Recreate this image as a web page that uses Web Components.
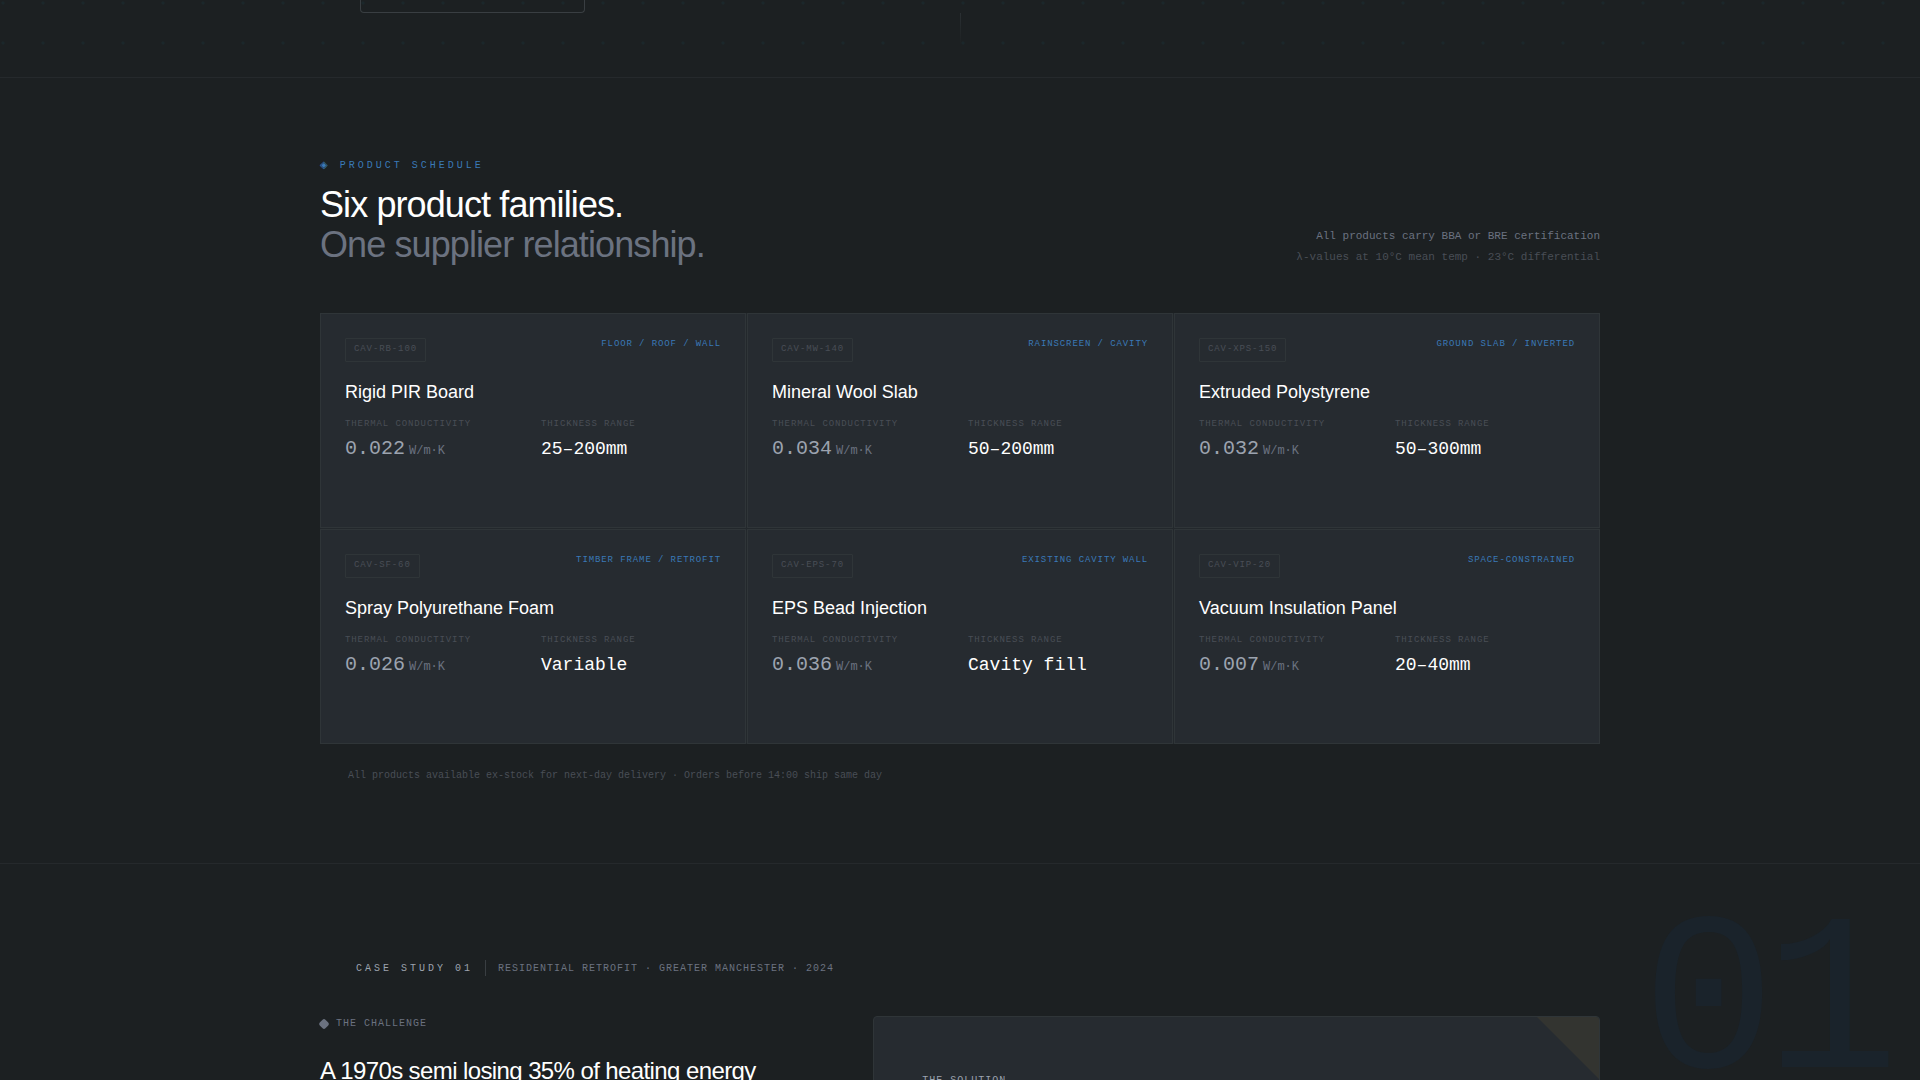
<!DOCTYPE html>
<html lang="en">
<head>
<meta charset="utf-8">
<meta name="viewport" content="width=device-width, initial-scale=1">
<title>Product schedule</title>
<style>
  :root {
    --bg: #1c2022;
    --panel: #262b30;
    --line: #2f3538;
    --rule: #25292c;
    --blue: #3a79b7;
    --white: #ffffff;
    --silver: #9ca3af;
    --grey: #6b7280;
    --dim: #494e56;
    --mono: "Liberation Mono", monospace;
    --sans: "Liberation Sans", sans-serif;
  }
  html, body { margin: 0; }
  body {
    height: 100vh;
    overflow: hidden;
    background: var(--bg);
    color: var(--white);
    font-family: var(--sans);
  }
</style>
</head>
<body>
<hero-tail></hero-tail>

<product-schedule>
  <span slot="eyebrow">PRODUCT SCHEDULE</span>
  <span slot="title">Six product families.</span>
  <span slot="subtitle">One supplier relationship.</span>
  <span slot="note">All products carry BBA or BRE certification</span>
  <span slot="subnote">λ-values at 10°C mean temp · 23°C differential</span>

  <product-card code="CAV-RB-100" use="FLOOR / ROOF / WALL" lambda="0.022" range="25–200mm">Rigid PIR Board</product-card>
  <product-card code="CAV-MW-140" use="RAINSCREEN / CAVITY" lambda="0.034" range="50–200mm">Mineral Wool Slab</product-card>
  <product-card code="CAV-XPS-150" use="GROUND SLAB / INVERTED" lambda="0.032" range="50–300mm">Extruded Polystyrene</product-card>
  <product-card code="CAV-SF-60" use="TIMBER FRAME / RETROFIT" lambda="0.026" range="Variable">Spray Polyurethane Foam</product-card>
  <product-card code="CAV-EPS-70" use="EXISTING CAVITY WALL" lambda="0.036" range="Cavity fill">EPS Bead Injection</product-card>
  <product-card code="CAV-VIP-20" use="SPACE-CONSTRAINED" lambda="0.007" range="20–40mm">Vacuum Insulation Panel</product-card>

  <span slot="footnote">All products available ex-stock for next-day delivery · Orders before 14:00 ship same day</span>
</product-schedule>

<case-study number="01">
  <span slot="label">CASE STUDY 01</span>
  <span slot="meta">RESIDENTIAL RETROFIT · GREATER MANCHESTER · 2024</span>
  <span slot="challenge">THE CHALLENGE</span>
  <span slot="headline">A 1970s semi losing 35% of heating energy</span>
  <solution-panel slot="solution">THE SOLUTION</solution-panel>
</case-study>

<script>
  class Base extends HTMLElement {
    constructor() {
      super();
      this.attachShadow({ mode: "open" });
    }
    connectedCallback() {
      this.shadowRoot.innerHTML = this.render();
    }
    attr(name) {
      return this.getAttribute(name) || "";
    }
  }

  /* Lower edge of the hero: dot grid, outlined box and scroll line */
  customElements.define("hero-tail", class extends Base {
    render() {
      return `
        <style>
          :host {
            display: block;
            box-sizing: border-box;
            height: 78px;
            border-bottom: 1px solid var(--rule);
            background-image: radial-gradient(circle at 3px 3px, #1b272b 1px, transparent 2px);
            background-size: 40px 40px;
          }
          .wrap {
            display: grid;
            grid-template-columns: 1fr 1fr;
            max-width: 1280px;
            height: 100%;
            margin: 0 auto;
          }
          .box {
            box-sizing: border-box;
            width: 225px;
            height: 13px;
            margin-left: 40px;
            border: 1px solid #393e42;
            border-top: 0;
            border-radius: 0 0 4px 4px;
          }
          .scroll {
            align-self: end;
            width: 1px;
            height: 64px;
            background: linear-gradient(#2b3033, transparent 50%);
          }
        </style>
        <div class="wrap"><div class="box"></div><div class="scroll"></div></div>`;
    }
  });

  customElements.define("product-card", class extends Base {
    render() {
      return `
        <style>
          :host {
            display: block;
            box-sizing: border-box;
            min-height: 215px;
            padding: 24px;
            border: 1px solid var(--line);
            background: var(--panel);
          }
          header {
            display: flex;
            justify-content: space-between;
            align-items: flex-start;
            margin-bottom: 16px;
            font: 9px/13px var(--mono);
            letter-spacing: 0.1em;
          }
          .code {
            box-sizing: border-box;
            min-height: 24px;
            padding: 4px 8px;
            border: 1px solid var(--line);
            border-radius: 1px;
            color: var(--dim);
          }
          .use { color: var(--blue); }
          h3 {
            margin: 0 0 12px;
            font: 400 18px/28px var(--sans);
            color: var(--white);
          }
          dl {
            display: grid;
            grid-template-columns: 1fr 1fr;
            gap: 16px;
            margin: 0;
            font-family: var(--mono);
          }
          dt {
            margin-bottom: 4px;
            font-size: 9px;
            line-height: 13px;
            letter-spacing: 0.1em;
            color: var(--dim);
          }
          dd {
            display: flex;
            align-items: baseline;
            gap: 4px;
            margin: 0;
            line-height: 28px;
          }
          .lambda { font-size: 20px; color: var(--silver); }
          .unit { font-size: 12px; color: var(--grey); }
          .range { font-size: 18px; color: var(--white); }
        </style>
        <header><span class="code">${this.attr("code")}</span><span class="use">${this.attr("use")}</span></header>
        <h3><slot></slot></h3>
        <dl>
          <div><dt>THERMAL CONDUCTIVITY</dt><dd><span class="lambda">${this.attr("lambda")}</span><span class="unit">W/m·K</span></dd></div>
          <div><dt>THICKNESS RANGE</dt><dd><span class="range">${this.attr("range")}</span></dd></div>
        </dl>`;
    }
  });

  customElements.define("product-schedule", class extends Base {
    render() {
      return `
        <style>
          :host { display: block; padding: 80px 0; }
          .wrap { max-width: 1280px; margin: 0 auto; }
          .head {
            display: flex;
            justify-content: space-between;
            align-items: flex-end;
            margin-bottom: 48px;
          }
          .eyebrow {
            display: flex;
            gap: 9px;
            margin: 0 0 12px;
            font: 10px/15px var(--mono);
            letter-spacing: 0.3em;
            color: var(--blue);
          }
          .mark { font-family: "DejaVu Sans", sans-serif; line-height: 14px; }
          h2 {
            margin: 0;
            font: 400 36px/40px var(--sans);
            letter-spacing: -0.025em;
          }
          h2 span { display: block; }
          .second { color: var(--grey); }
          .notes {
            display: flex;
            flex-direction: column;
            gap: 6px;
            font: 11px/15px var(--mono);
            text-align: right;
            color: var(--grey);
          }
          .notes p { margin: 0; }
          .notes p + p { color: var(--dim); }
          .grid {
            display: grid;
            grid-template-columns: repeat(3, 1fr);
            gap: 1px;
            background: #23282c;
          }
          .foot {
            margin: 24px 0 0;
            padding-left: 28px;
            font: 10px/15px var(--mono);
            color: var(--dim);
          }
        </style>
        <div class="wrap">
          <div class="head">
            <div>
              <p class="eyebrow"><span class="mark">◈</span><slot name="eyebrow"></slot></p>
              <h2><span><slot name="title"></slot></span><span class="second"><slot name="subtitle"></slot></span></h2>
            </div>
            <div class="notes"><p><slot name="note"></slot></p><p><slot name="subnote"></slot></p></div>
          </div>
          <div class="grid"><slot></slot></div>
          <p class="foot"><slot name="footnote"></slot></p>
        </div>`;
    }
  });

  customElements.define("solution-panel", class extends Base {
    render() {
      return `
        <style>
          :host {
            display: block;
            position: relative;
            overflow: hidden;
            padding: 56px 48px;
            border: 1px solid var(--line);
            border-radius: 4px;
            background: var(--panel);
          }
          .corner {
            position: absolute;
            top: -1px;
            right: -1px;
            width: 64px;
            height: 64px;
            background: #333430;
            clip-path: polygon(0 0, 100% 0, 100% 100%);
          }
          p {
            margin: 0;
            font: 10px/15px var(--mono);
            letter-spacing: 0.1em;
            color: var(--silver);
          }
        </style>
        <div class="corner"></div>
        <p><slot></slot></p>`;
    }
  });

  customElements.define("case-study", class extends Base {
    render() {
      return `
        <style>
          :host {
            display: block;
            position: relative;
            overflow: hidden;
            padding: 96px 0;
            border-top: 1px solid var(--rule);
          }
          .number {
            position: absolute;
            top: 32px;
            right: 32px;
            font: 224px/1 var(--mono);
            letter-spacing: -0.05em;
            color: #1a232b;
          }
          .wrap { position: relative; max-width: 1280px; margin: 0 auto; }
          .bar {
            display: flex;
            align-items: center;
            gap: 12px;
            margin-bottom: 40px;
            padding-left: 36px;
            font: 10px/15px var(--mono);
          }
          .label { letter-spacing: 0.3em; color: var(--silver); }
          .divider { width: 1px; height: 16px; background: #393e42; }
          .meta { letter-spacing: 0.1em; color: var(--grey); }
          .cols { display: grid; grid-template-columns: 5fr 7fr; gap: 34px; }
          .tag {
            display: flex;
            align-items: center;
            gap: 8px;
            margin: 0 0 24px;
            font: 10px/15px var(--mono);
            letter-spacing: 0.1em;
            color: var(--grey);
          }
          .diamond {
            width: 8px;
            height: 8px;
            border-radius: 2px;
            background: var(--grey);
            transform: rotate(45deg);
          }
          h3 {
            margin: 0;
            font: 400 24px/32px var(--sans);
            letter-spacing: -0.025em;
          }
        </style>
        <div class="number" aria-hidden="true">${this.attr("number")}</div>
        <div class="wrap">
          <div class="bar">
            <span class="label"><slot name="label"></slot></span>
            <span class="divider"></span>
            <span class="meta"><slot name="meta"></slot></span>
          </div>
          <div class="cols">
            <div>
              <p class="tag"><span class="diamond"></span><slot name="challenge"></slot></p>
              <h3><slot name="headline"></slot></h3>
            </div>
            <slot name="solution"></slot>
          </div>
        </div>`;
    }
  });
</script>
</body>
</html>
